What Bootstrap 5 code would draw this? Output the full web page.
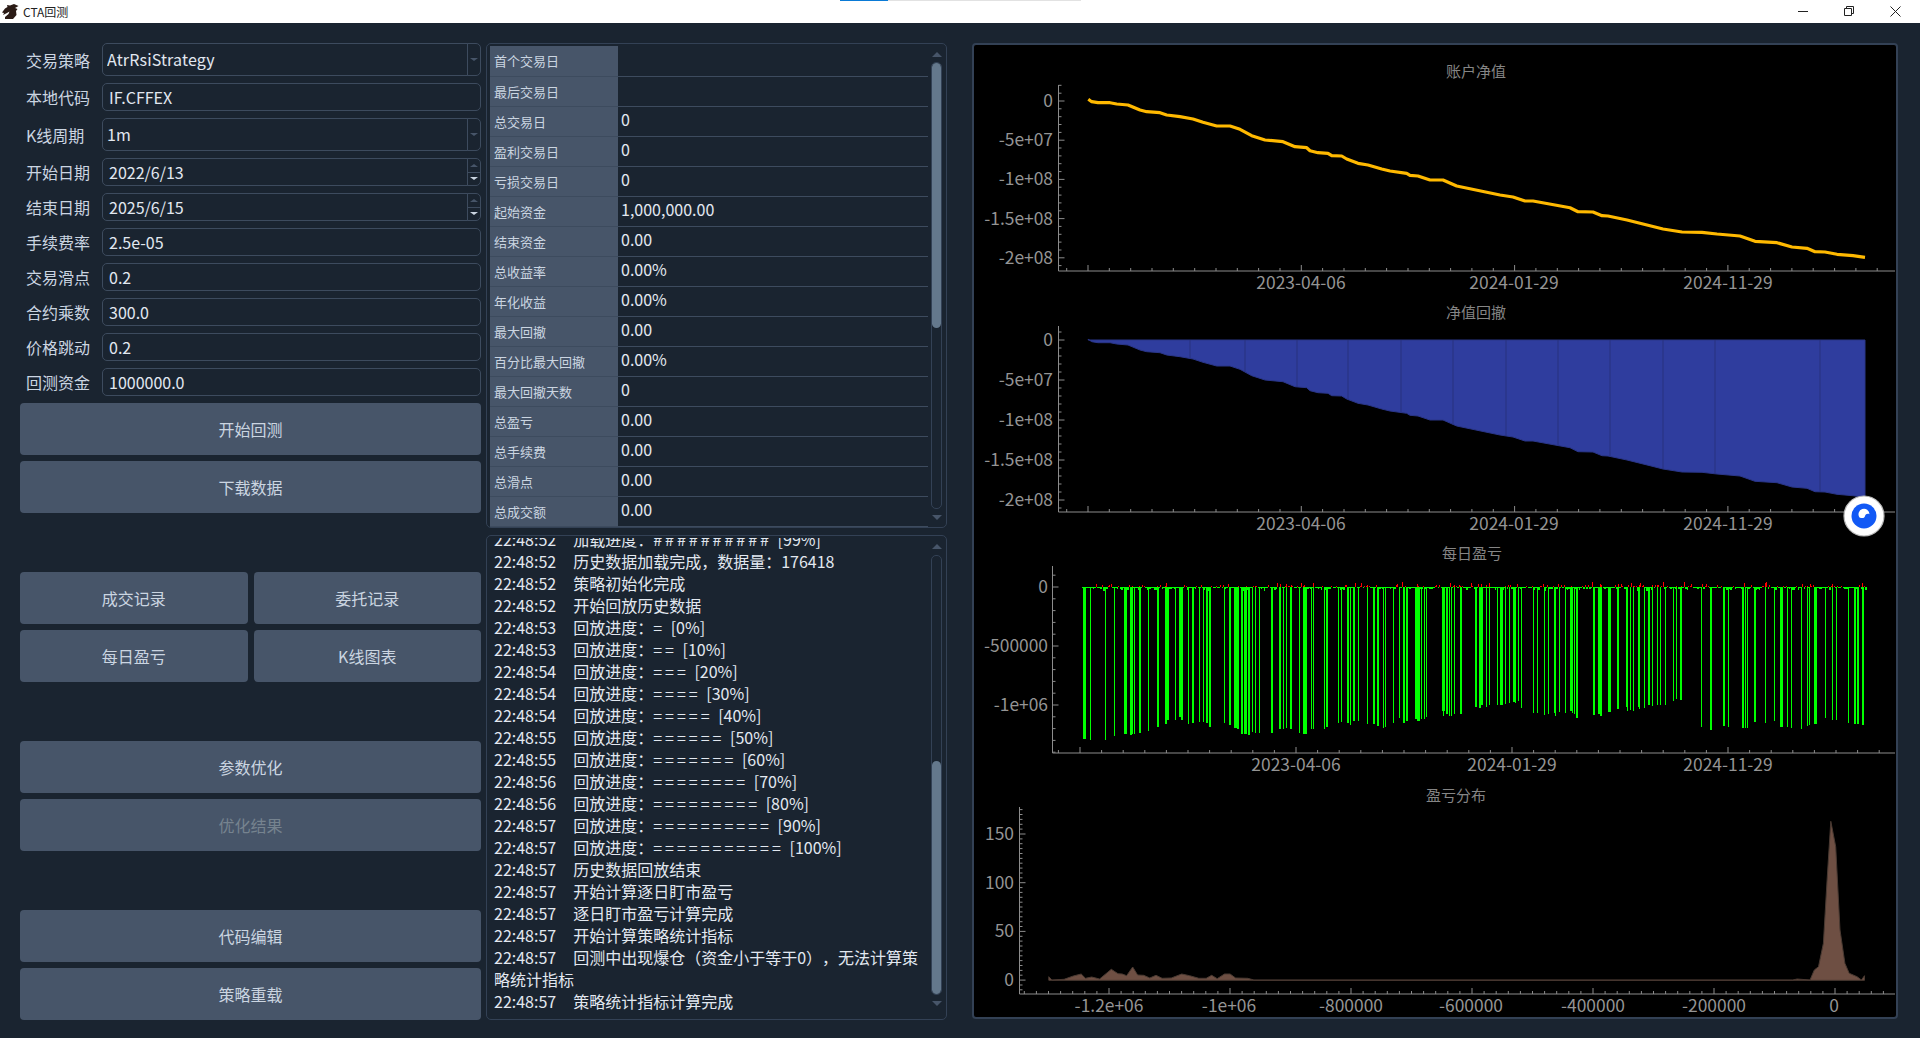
<!DOCTYPE html>
<html lang="zh-CN">
<head>
<meta charset="utf-8">
<title>CTA回测</title>
<link href="https://cdn.jsdelivr.net/npm/bootstrap@5.3.0/dist/css/bootstrap.min.css" rel="stylesheet">
<style>
html,body{height:100%;}
body{margin:0;background:#1a2430;color:#e2e8f0;font-family:"Noto Sans CJK SC","Liberation Sans",sans-serif;font-size:16px;overflow:hidden;text-spacing-trim:space-all;}
.winbar{height:23px;background:#fff;color:#222;font-size:12px;position:relative;}
.winbar-logo{margin:0 4px 0 2px;}
.wintop{position:absolute;left:840px;top:0;width:241px;height:1px;background:#e2e2e2;border-radius:0;}
.wintop .progress-bar{background:#0a7ad6;}
.wincell{width:46px;}
.winctl{margin-right:2px;}
.workspace{height:1015px;padding:20px 21px 0 20px;gap:0;}
.leftcol{width:461px;gap:7px;}
.fieldlabel{width:82px;padding-left:6px;margin:0;color:#cbd5e1;font-size:16px;line-height:1;white-space:nowrap;}
.fieldbox{flex:1;height:28px;}
.fieldbox.tall{height:33px;}
.fieldbox .form-control{background:transparent;border:1px solid #3d4b5e;border-radius:5px;color:#e2e8f0;padding:0 6px;font-size:16px;line-height:1;box-shadow:none;min-height:0;height:100%;}
.fieldbox.tall .form-control{padding:0 0 2px 4px;letter-spacing:.15px;}
.fieldbox .input-group-text{background:transparent;border:1px solid #3d4b5e;border-left:1px solid #3d4b5e;border-radius:0 5px 5px 0;padding:0;width:14px;margin-left:-1px;flex-direction:column;justify-content:center;}
.arrow-dn,.arrow-up{width:0;height:0;border-left:4px solid transparent;border-right:4px solid transparent;}
.arrow-dn{border-top:3px solid #475569;}
.arrow-up{border-bottom:3px solid #475569;}
.arrow-dn.lit{border-top-color:#cbd5e1;}
.spinhalf{flex:1;width:100%;display:flex;align-items:center;justify-content:center;}
.spinhalf+.spinhalf{border-top:1px solid #3d4b5e;}
.actbtn{height:52px;background:#475569;color:#cbd5e1;border:0;border-radius:4px;font-size:16px;padding:0;width:100%;}
.actbtn:hover{background:#475569;color:#cbd5e1;}
.actbtn:disabled{background:#475569;color:#76838f;opacity:1;}
.btnstack{gap:6px;}
.btnpair{gap:6px;}
.btnpair>.actbtn{flex:1;width:auto;}
.sepgap{height:47px;}
.midcol{width:461px;margin:0 25px 0 5px;gap:7px;}
.framebox{border:1px solid #334155;border-radius:5px;}
.statbox{height:485px;padding:2px 4px 2px 3px;gap:3px;}
.stattable{width:438px;margin:0;table-layout:fixed;--bs-table-bg:transparent;--bs-table-color:#e2e8f0;border-bottom:0;}
.stattable tr{height:30px;}
.stattable th,.stattable td{padding:0;vertical-align:middle;border-bottom:1px solid #3d4b5e;height:30px;line-height:1;box-shadow:none;}
.stattable th{width:128px;background:#475569;color:#cbd5e1;font-size:13px;font-weight:400;padding-left:4px;padding-top:0;}
.stattable td{font-size:16px;padding-left:3px;color:#e2e8f0;background:transparent;padding-bottom:4px;}
.vscroll{width:11px;}
.vscroll .arrowcell{height:16px;display:flex;align-items:center;justify-content:center;flex:none;}
.vscroll .arrow-up,.vscroll .arrow-dn{border-left-width:5px;border-right-width:5px;border-top-width:5px;border-bottom-width:5px;}
.vtrack{flex:1;border:1px solid #334155;border-radius:5px;min-height:0;}
.vthumb{background:#64788c;border-radius:5px;}
.logbox{height:485px;padding:2px 4px 7px 7px;gap:0;position:relative;}
.logtext{flex:1;height:100%;overflow:hidden;justify-content:flex-end;min-width:0;}
.logline{font-size:16px;line-height:22px;color:#e2e8f0;padding-right:4px;word-spacing:2px;}
.logtime{margin-right:17px;}
.barrun{letter-spacing:3px;}
.vscroll.logbar .arrowcell{height:17px;}
.chartframe{width:926px;height:976px;border:2px solid #334155;border-radius:4px;background:#000;position:relative;overflow:hidden;}
.plot{display:block;}
.plot text{font-family:"Noto Sans CJK SC","Liberation Sans",sans-serif;font-size:17.4px;fill:#949494;}
.plot text.plottitle{font-size:15px;fill:#858585;}
.floatball{position:absolute;left:868px;top:449px;width:44px;height:44px;}
</style>
</head>
<body>
<div class="winbar d-flex align-items-center">
  <svg class="winbar-logo" width="17" height="15" viewBox="0 0 17 15"><path fill="#2b1b16" d="M16.500 2 L12 0 L8 1.500 L5 1 L5.500 3 L3 4.500 L0 8.500 L2 9 L1 11 L5 9 L7.500 7.500 L6.500 10 L3 13 L3 15 L11 15 L14.500 11 L14 7 L15.500 5 L13 4 Z"/></svg>
  <span>CTA回测</span>
  <div class="progress wintop"><div class="progress-bar" style="width:20%"></div></div>
  <div class="ms-auto d-flex winctl">
    <div class="wincell d-flex justify-content-center"><svg width="10" height="10" viewBox="0 0 10 10"><path d="M0 5.500H10" stroke="#222" stroke-width="1"/></svg></div>
    <div class="wincell d-flex justify-content-center"><svg width="10" height="10" viewBox="0 0 10 10"><path d="M.5 2.500h7v7h-7zM2.500 2.500v-2h7v7h-2" fill="none" stroke="#222" stroke-width="1"/></svg></div>
    <div class="wincell d-flex justify-content-center"><svg width="11" height="11" viewBox="0 0 11 11"><path d="M.5.5l10 10M10.500.5l-10 10" stroke="#222" stroke-width="1"/></svg></div>
  </div>
</div>

<div class="workspace d-flex align-items-start">
  <div class="leftcol d-flex flex-column">
    <div class="d-flex align-items-center"><label class="fieldlabel">交易策略</label><div class="fieldbox tall input-group"><input class="form-control" value="AtrRsiStrategy"><span class="input-group-text"><span class="arrow-dn"></span></span></div></div>
    <div class="d-flex align-items-center"><label class="fieldlabel">本地代码</label><div class="fieldbox"><input class="form-control" value="IF.CFFEX"></div></div>
    <div class="d-flex align-items-center"><label class="fieldlabel">K线周期</label><div class="fieldbox tall input-group"><input class="form-control" value="1m"><span class="input-group-text"><span class="arrow-dn"></span></span></div></div>
    <div class="d-flex align-items-center"><label class="fieldlabel">开始日期</label><div class="fieldbox input-group"><input class="form-control" value="2022/6/13"><span class="input-group-text"><span class="spinhalf"><span class="arrow-up"></span></span><span class="spinhalf"><span class="arrow-dn lit"></span></span></span></div></div>
    <div class="d-flex align-items-center"><label class="fieldlabel">结束日期</label><div class="fieldbox input-group"><input class="form-control" value="2025/6/15"><span class="input-group-text"><span class="spinhalf"><span class="arrow-up"></span></span><span class="spinhalf"><span class="arrow-dn lit"></span></span></span></div></div>
    <div class="d-flex align-items-center"><label class="fieldlabel">手续费率</label><div class="fieldbox"><input class="form-control" value="2.5e-05"></div></div>
    <div class="d-flex align-items-center"><label class="fieldlabel">交易滑点</label><div class="fieldbox"><input class="form-control" value="0.2"></div></div>
    <div class="d-flex align-items-center"><label class="fieldlabel">合约乘数</label><div class="fieldbox"><input class="form-control" value="300.0"></div></div>
    <div class="d-flex align-items-center"><label class="fieldlabel">价格跳动</label><div class="fieldbox"><input class="form-control" value="0.2"></div></div>
    <div class="d-flex align-items-center"><label class="fieldlabel">回测资金</label><div class="fieldbox"><input class="form-control" value="1000000.0"></div></div>

    <div class="d-flex flex-column btnstack">
      <button class="btn actbtn">开始回测</button>
      <button class="btn actbtn">下载数据</button>
      <div class="sepgap"></div>
      <div class="d-flex btnpair"><button class="btn actbtn">成交记录</button><button class="btn actbtn">委托记录</button></div>
      <div class="d-flex btnpair"><button class="btn actbtn">每日盈亏</button><button class="btn actbtn">K线图表</button></div>
      <div class="sepgap"></div>
      <button class="btn actbtn">参数优化</button>
      <button class="btn actbtn" disabled>优化结果</button>
      <div class="sepgap"></div>
      <button class="btn actbtn">代码编辑</button>
      <button class="btn actbtn">策略重载</button>
    </div>
  </div>

  <div class="midcol d-flex flex-column">
    <div class="framebox statbox d-flex">
      <table class="table stattable">
        <tbody>
          <tr><th>首个交易日</th><td></td></tr>
          <tr><th>最后交易日</th><td></td></tr>
          <tr><th>总交易日</th><td>0</td></tr>
          <tr><th>盈利交易日</th><td>0</td></tr>
          <tr><th>亏损交易日</th><td>0</td></tr>
          <tr><th>起始资金</th><td>1,000,000.00</td></tr>
          <tr><th>结束资金</th><td>0.00</td></tr>
          <tr><th>总收益率</th><td>0.00%</td></tr>
          <tr><th>年化收益</th><td>0.00%</td></tr>
          <tr><th>最大回撤</th><td>0.00</td></tr>
          <tr><th>百分比最大回撤</th><td>0.00%</td></tr>
          <tr><th>最大回撤天数</th><td>0</td></tr>
          <tr><th>总盈亏</th><td>0.00</td></tr>
          <tr><th>总手续费</th><td>0.00</td></tr>
          <tr><th>总滑点</th><td>0.00</td></tr>
          <tr><th>总成交额</th><td>0.00</td></tr>
        </tbody>
      </table>
      <div class="vscroll d-flex flex-column">
        <div class="arrowcell"><span class="arrow-up"></span></div>
        <div class="vtrack"><div class="vthumb" style="height:265px"></div></div>
        <div class="arrowcell"><span class="arrow-dn"></span></div>
      </div>
    </div>

    <div class="framebox logbox d-flex">
      <div class="logtext d-flex flex-column" id="logtext"></div>
      <div class="vscroll logbar d-flex flex-column ms-1">
        <div class="arrowcell"><span class="arrow-up"></span></div>
        <div class="vtrack d-flex flex-column justify-content-end"><div class="vthumb" style="height:233px"></div></div>
        <div class="arrowcell"><span class="arrow-dn"></span></div>
      </div>
    </div>
  </div>

  <div class="chartframe">
    <svg class="plot" id="p1" width="922" height="250" viewBox="974 45 922 250"></svg>
    <svg class="plot" id="p2" width="922" height="241" viewBox="974 295 922 241"></svg>
    <svg class="plot" id="p3" width="922" height="241" viewBox="974 536 922 241"></svg>
    <svg class="plot" id="p4" width="922" height="240" viewBox="974 777 922 240"></svg>
    <svg class="floatball" viewBox="0 0 44 44">
      <circle cx="22" cy="22" r="20" fill="#fff" stroke="#b8b8b8" stroke-width="1.2"/>
      <circle cx="22" cy="22" r="12.500" fill="#1259f5"/>
      <path d="M17.500 23.500a5.500 5.500 0 1 1 10-3.300c-1.800-1-4-.2-4.400 1.500c-.4 1.800-2 3.300-5.600 1.800z" fill="#fff"/>
    </svg>
  </div>
</div>

<script src="https://cdn.jsdelivr.net/npm/bootstrap@5.3.0/dist/js/bootstrap.bundle.min.js"></script>
<script>
// ---------- log ----------
var log=[["22:48:52","加载进度：########## [99%]"],["22:48:52","历史数据加载完成，数据量：176418"],["22:48:52","策略初始化完成"],["22:48:52","开始回放历史数据"],
["22:48:53","回放进度：= [0%]"],["22:48:53","回放进度：== [10%]"],["22:48:54","回放进度：=== [20%]"],["22:48:54","回放进度：==== [30%]"],["22:48:54","回放进度：===== [40%]"],["22:48:55","回放进度：====== [50%]"],["22:48:55","回放进度：======= [60%]"],["22:48:56","回放进度：======== [70%]"],["22:48:56","回放进度：========= [80%]"],["22:48:57","回放进度：========== [90%]"],["22:48:57","回放进度：=========== [100%]"],
["22:48:57","历史数据回放结束"],["22:48:57","开始计算逐日盯市盈亏"],["22:48:57","逐日盯市盈亏计算完成"],["22:48:57","开始计算策略统计指标"],["22:48:57","回测中出现爆仓（资金小于等于0），无法计算策略统计指标"],["22:48:57","策略统计指标计算完成"]];
document.getElementById('logtext').innerHTML=log.map(function(l){return '<div class="logline"><span class="logtime">'+l[0]+'</span>'+l[1].replace(/[=#]+/,'<span class="barrun">$&</span>')+'</div>';}).join('');

// ---------- chart helpers ----------
function axes(c){
  var s='',i,x,y;
  var col='#8c8c8c';
  s+='<path d="M'+c.ax+' '+c.top+'V'+c.bot+'H1895" fill="none" stroke="'+col+'" stroke-width="1"/>';
  var step=c.xStep/c.xMinor;
  for(i=-60;i<120;i++){
    x=c.x0+i*step;
    if(x<=c.ax||x>1895)continue;
    var maj=(((i%c.xMinor)+c.xMinor)%c.xMinor)===0;
    s+='<path d="M'+x.toFixed(1)+' '+c.bot+'v'+(maj?-6:-3)+'" stroke="'+col+'"/>';
  }
  var ys=c.yStep/c.yMinor;
  for(i=-10;i<80;i++){
    y=c.y0+i*ys;
    if(y<c.top||y>c.bot)continue;
    var my=(((i%c.yMinor)+c.yMinor)%c.yMinor)===0;
    s+='<path d="M'+c.ax+' '+y.toFixed(1)+'h'+(my?6:3)+'" stroke="'+col+'"/>';
  }
  c.yl.forEach(function(l,k){
    s+='<text x="'+c.yx+'" y="'+(c.y0+k*c.yStep+6).toFixed(1)+'" text-anchor="end">'+l+'</text>';
  });
  c.xl.forEach(function(l){
    s+='<text x="'+l[1]+'" y="'+(c.bot+18)+'" text-anchor="middle">'+l[0]+'</text>';
  });
  s+='<text class="plottitle" x="'+c.tx+'" y="'+c.ty+'" text-anchor="middle">'+c.title+'</text>';
  return s;
}
var eq=[[1088.3,99.3],[1091.7,101.7],[1098,102.7],[1110,102.7],[1116.7,104],[1128,105],[1140,110],[1146.7,111.7],[1160,112.7],[1166.7,115],[1180,116.7],[1193,119],[1203,122.3],[1216.7,126],[1230,126],[1240,129.3],[1251.7,135.7],[1265,140],[1283,141.7],[1295,146.7],[1306.7,147.7],[1310,150.7],[1318,152.7],[1328,153.3],[1331.7,155.700],[1341.7,156],[1346.7,159],[1358,163.3],[1368,165],[1381.7,169],[1390,171],[1406.7,173.3],[1410,175.3],[1418,176],[1430,180],[1443,180],[1456.7,186],[1500,195],[1513,197],[1525,201],[1533,201],[1555,205],[1570,207.7],[1578,211.7],[1593,212],[1602,215.7],[1608,216],[1627,220],[1650,225.7],[1663,229],[1682,232],[1702,232.300],[1717,234],[1740,236],[1755,241.3],[1777,242.7],[1792,247],[1807,248.3],[1815,251.7],[1825,252],[1837,254.3],[1853,255.7],[1865,257.3]];
var xl=[["2023-04-06",1301],["2024-01-29",1514],["2024-11-29",1728]];
var yl=["0","-5e+07","-1e+08","-1.5e+08","-2e+08"];

// chart 1
var s1=axes({ax:1058.5,top:85,bot:271,x0:1088,xStep:213.3,xMinor:10,y0:101,yStep:39.2,yMinor:5,yx:1053,yl:yl,xl:xl,title:"账户净值",tx:1476,ty:77});
s1+='<polyline fill="none" stroke="#ffb900" stroke-width="3.2" stroke-linejoin="round" points="'+eq.map(function(p){return p[0]+','+p[1];}).join(' ')+'"/>';
document.getElementById('p1').innerHTML=s1;

// chart 2
var s2=axes({ax:1058.5,top:326,bot:512,x0:1088,xStep:213.3,xMinor:10,y0:340,yStep:40,yMinor:5,yx:1053,yl:yl,xl:xl,title:"净值回撤",tx:1476,ty:318});
s2+='<polygon fill="#2f3d9e" stroke="#2a3688" stroke-width="1" points="1088,340 1865,340 '+eq.slice().reverse().map(function(p){return p[0]+','+(p[1]+240);}).join(' ')+'"/>';
[1190,1245,1297,1348,1401,1453,1506,1558,1610,1663,1715,1820].forEach(function(x){
  var y=340;
  for(var i=1;i<eq.length;i++){if(eq[i][0]>=x){var a=eq[i-1],b=eq[i];y=a[1]+(b[1]-a[1])*(x-a[0])/(b[0]-a[0])+240;break;}}
  s2+='<path d="M'+x+' 340V'+y.toFixed(1)+'" stroke="#28337f"/>';
});
document.getElementById('p2').innerHTML=s2;

// chart 3
var z6="368:3:597,391:1:599,436:1:599,463:1:587,491:2:583,497:1:583,510:2:586,516:1:583,523:1:581,537:2:580,565:1:572,590:2:560,615:2:553,621:2:540,644:1:540,657:2:532,664:2:539,683:1:551,697:2:549,716:1:545,729:1:545,738:2:549,747:2:561,793:1:549,807:2:555,821:3:565,830:2:567,843:2:582,852:3:583,863:2:585,877:1:576,886:1:578,897:1:580,932:2:578,957:2:566,969:1:567,979:1:565,990:2:567,1016:1:578,1029:3:581,1034:2:581,1054:1:566,1060:1:566,1092:1:566,1098:2:562,1134:1:549,1142:1:545,1160:2:550,1170:1:556,1180:2:542,1195:1:543,1220:1:553,1238:2:552,1250:2:559,1268:1:565,1275:1:560,1299:1:548,1316:1:533";
var z11="8:2:488,17:2:484,44:3:476,50:3:482,64:1:476,73:1:476,79:1:470,126:3:453,130:1:467,137:2:462,147:1:467,154:1:467,163:1:462,180:2:462,224:2:440,236:2:443,242:2:435,258:1:440,267:1:435,290:1:435,300:3:436,316:1:431,328:1:428,339:3:425,346:1:428,355:1:423,364:1:443,400:1:458,412:1:460,433:1:464,445:1:461,461:2:458,466:1:467,478:1:455,496:1:458,510:3:453,517:1:458,522:1:462,527:2:473,578:2:464,594:3:463,600:2:467,624:3:455,650:2:448,678:2:442,682:1:452,691:1:449,700:1:454,715:2:440,718:1:446,733:1:443,743:2:435,755:1:437,772:1:435,781:1:435,795:1:435,820:1:422,829:1:417,840:2:419,904:1:500,930:2:510,969:2:497,985:1:500,1026:2:503,1035:1:503,1042:1:503,1062:2:487,1095:1:488,1122:1:483,1140:3:500,1143:2:495,1162:1:500,1174:1:503,1204:1:506,1220:1:497,1228:1:494,1242:3:491,1276:1:473,1295:1:479,1309:1:479,1344:1:488,1362:2:491,1370:2:491,1386:2:494";
var s3=axes({ax:1052.5,top:566,bot:753,x0:1080,xStep:216,xMinor:10,y0:587,yStep:59,yMinor:5,yx:1048,yl:["0","-500000","-1e+06"],xl:[["2023-04-06",1296],["2024-01-29",1512],["2024-11-29",1728]],title:"每日盈亏",tx:1472,ty:559});
var g='',r='',seed=12345;
function rnd(){seed=(seed*1103515+12345)&0x7fffffff;return seed/0x7fffffff;}
z6.split(',').forEach(function(t){var a=t.split(':');g+='M'+(960+a[0]/3).toFixed(1)+' 587h'+a[1]+'V'+(540+a[2]/3).toFixed(1)+'h-'+a[1]+'z';});
z11.split(',').forEach(function(t){var a=t.split(':');g+='M'+(1400+a[0]/3).toFixed(1)+' 587h'+a[1]+'V'+(560+a[2]/3).toFixed(1)+'h-'+a[1]+'z';});
for(var x=1082;x<1866;x+=1.5){
  var v=rnd();
  if(v<0.32){var h=1+Math.floor(rnd()*rnd()*5);r+='M'+x+' 587h1v-'+h+'h-1z';}
  else{var h2=1+Math.floor(rnd()*rnd()*4);g+='M'+x+' 587h1.500v'+h2+'h-1.500z';}
}
s3+='<path d="'+g+'" fill="#00ff00" shape-rendering="crispEdges"/><path d="'+r+'" fill="#ff0000" shape-rendering="crispEdges"/>';
document.getElementById('p3').innerHTML=s3;

// chart 4
var hist=[[145,590],[150,600],[170,598],[185,588],[198,582],[205,595],[215,591],[228,597],[247,568],[258,581],[265,582],[272,587],[282,561],[290,585],[300,586],[310,594],[320,586],[330,595],[345,594],[362,582],[375,587],[390,595],[402,595],[411,586],[420,596],[432,582],[441,582],[450,594],[470,595],[480,600],[1360,600],[1367,597],[1388,600],[1395,570],[1402,560],[1410,490],[1416,300],[1422,124],[1430,200],[1437,450],[1445,550],[1452,580],[1465,590],[1472,600],[1477,587],[1477,601],[145,601]];
var s4=axes({ax:1019.5,top:807,bot:994,x0:1109,xStep:121,xMinor:10,y0:834,yStep:48.7,yMinor:10,yx:1014,yl:["150","100","50","0"],xl:[["-1.2e+06",1109],["-1e+06",1229],["-800000",1351],["-600000",1471],["-400000",1593],["-200000",1714],["0",1834]],title:"盈亏分布",tx:1456,ty:801});
s4+='<polygon fill="#6e4f43" stroke="#4a3a32" stroke-width="1" points="'+hist.map(function(p){return (960+p[0]/1.633).toFixed(1)+','+(780+p[1]/3).toFixed(1);}).join(' ')+'"/>';
document.getElementById('p4').innerHTML=s4;
</script>
</body>
</html>
